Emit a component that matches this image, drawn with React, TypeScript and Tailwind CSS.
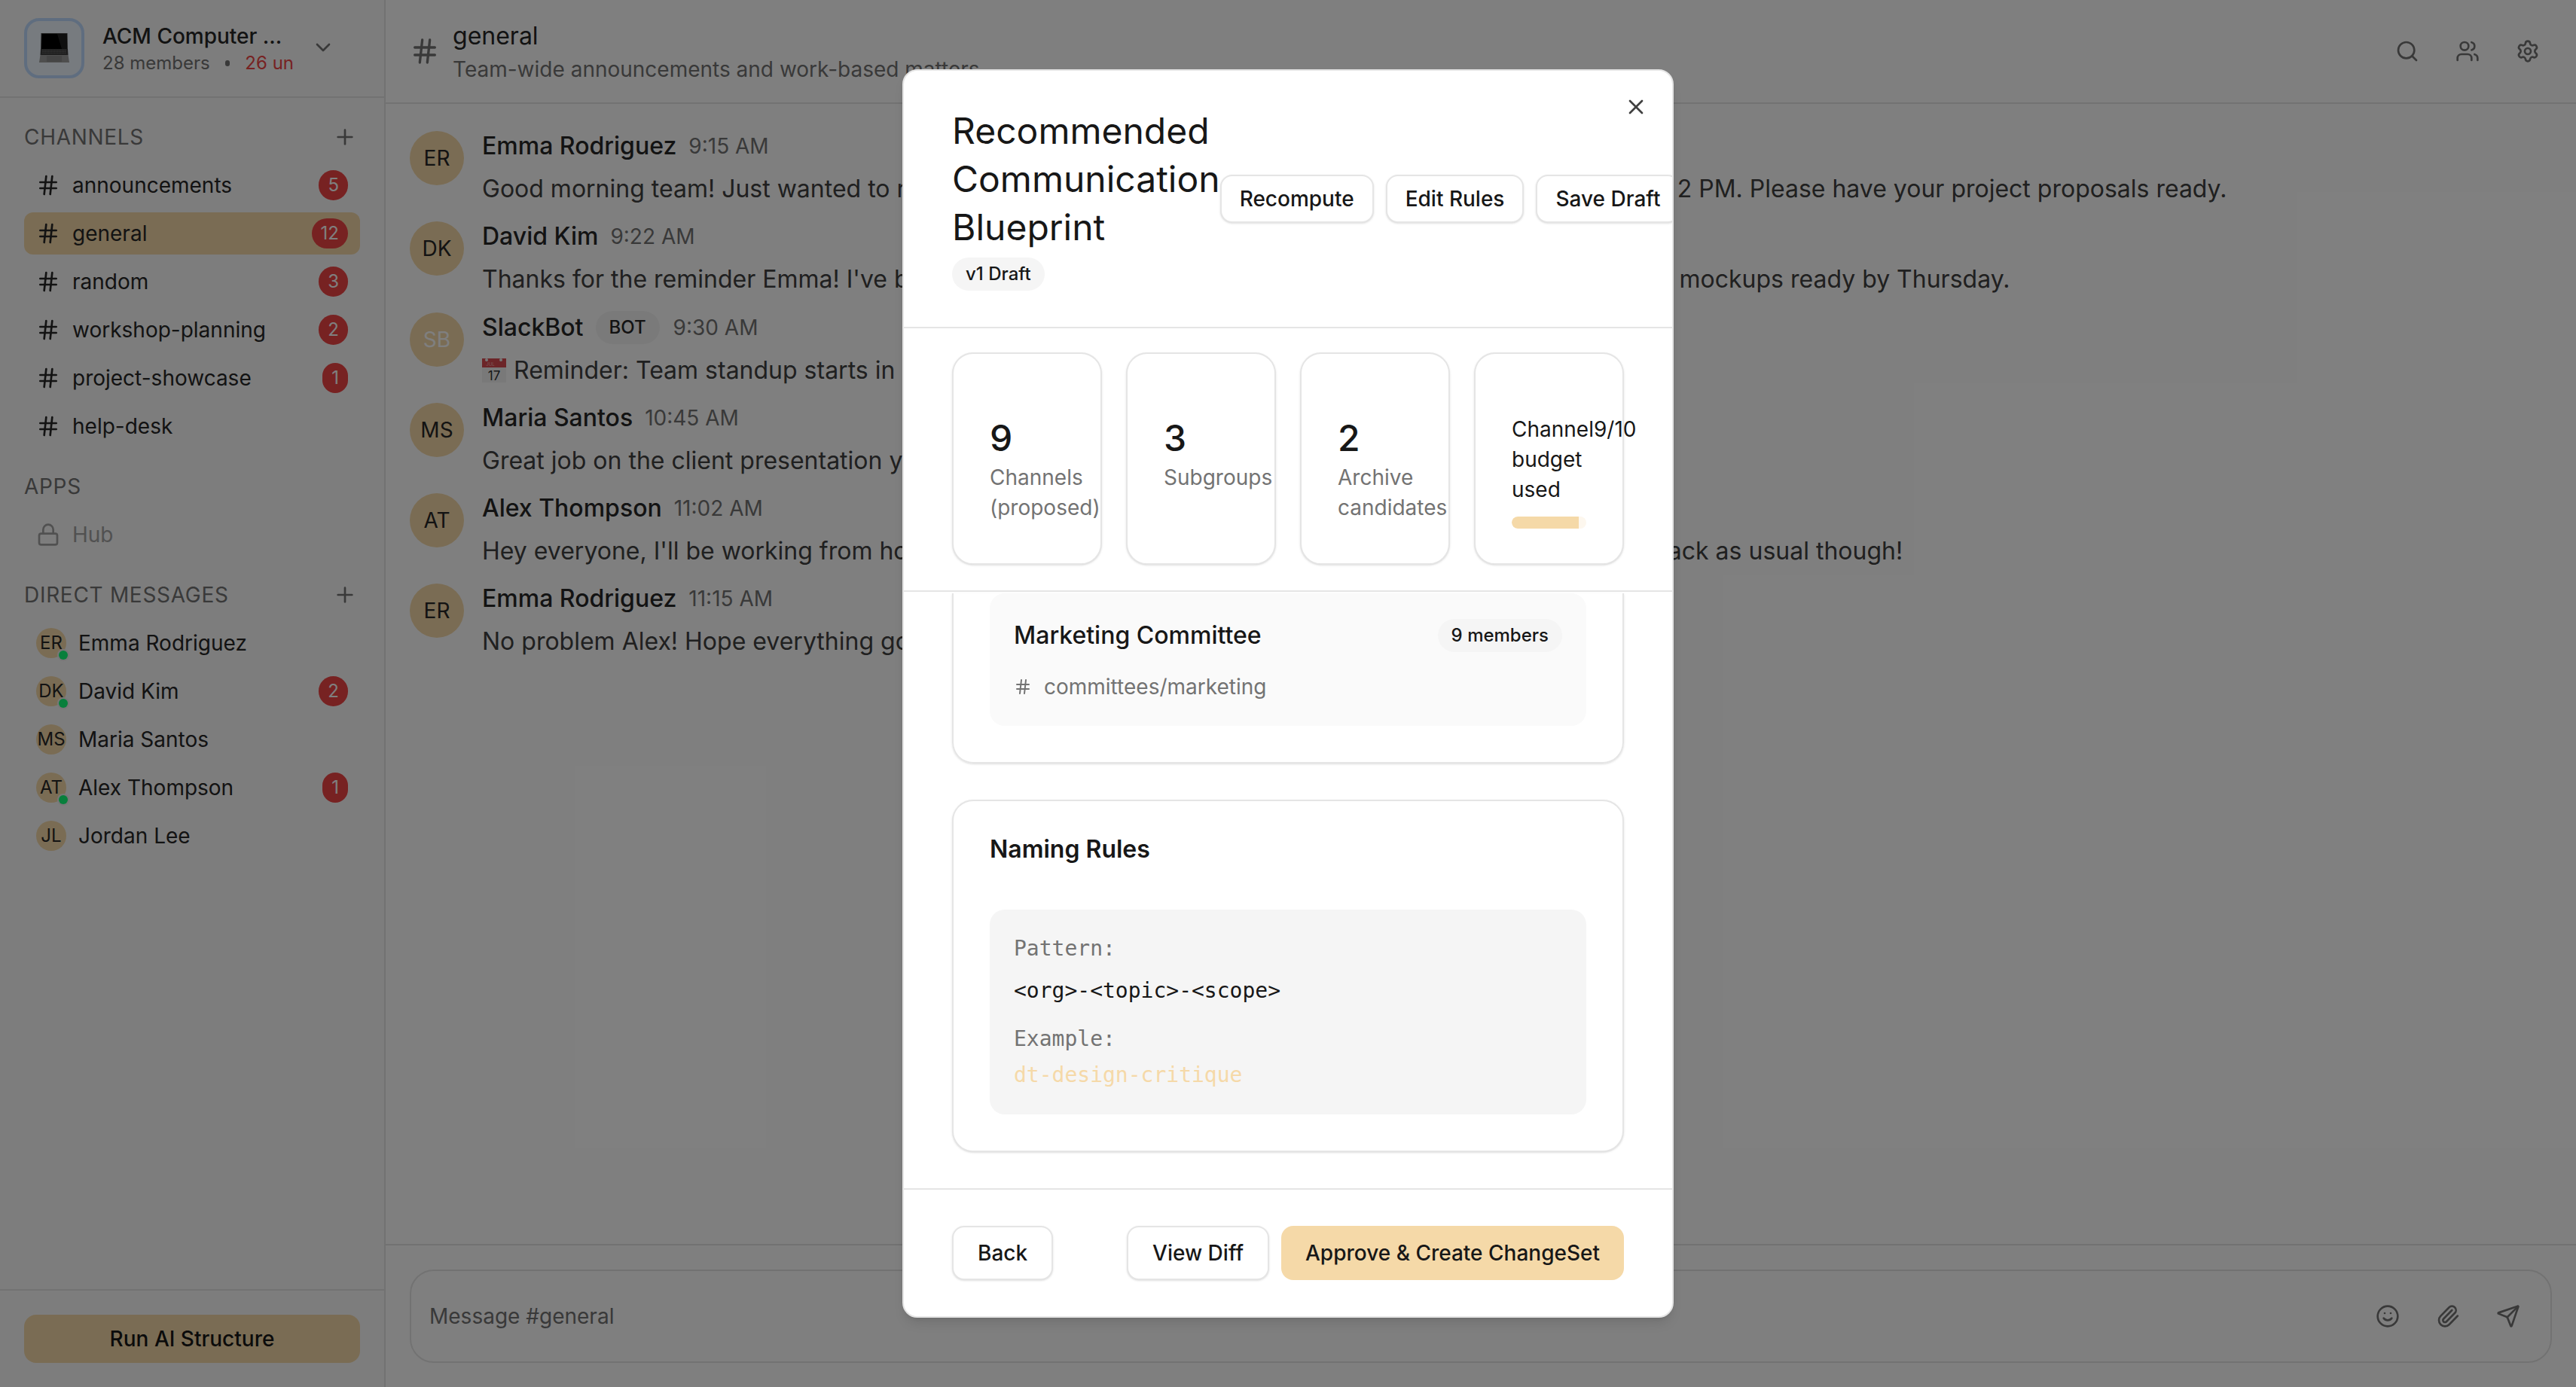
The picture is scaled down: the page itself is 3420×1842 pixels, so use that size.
import { Hash, Plus, ChevronDown, Lock, Search, Users, Settings, Smile, Paperclip, Send, X } from "lucide-react";

const channels = [
  { name: "announcements", count: "5" },
  { name: "general", count: "12", active: true },
  { name: "random", count: "3" },
  { name: "workshop-planning", count: "2" },
  { name: "project-showcase", count: "1" },
  { name: "help-desk" },
];

const people = [
  { initials: "ER", name: "Emma Rodriguez", online: true },
  { initials: "DK", name: "David Kim", online: true, count: "2" },
  { initials: "MS", name: "Maria Santos" },
  { initials: "AT", name: "Alex Thompson", online: true, count: "1" },
  { initials: "JL", name: "Jordan Lee" },
];

const messages = [
  { initials: "ER", name: "Emma Rodriguez", time: "9:15 AM", text: "Good morning team! Just wanted to remind everyone about our weekly all-hands team meeting today, at 2 PM. Please have your project proposals ready." },
  { initials: "DK", name: "David Kim", time: "9:22 AM", text: "Thanks for the reminder Emma! I've been busy working on the new homepage designs, and will have the mockups ready by Thursday." },
  { initials: "SB", name: "SlackBot", time: "9:30 AM", bot: true, text: "Reminder: Team standup starts in 15 minutes." },
  { initials: "MS", name: "Maria Santos", time: "10:45 AM", text: "Great job on the client presentation yesterday!" },
  { initials: "AT", name: "Alex Thompson", time: "11:02 AM", text: "Hey everyone, I'll be working from home today due to a big family commitment. I'll still be available on Slack as usual though!" },
  { initials: "ER", name: "Emma Rodriguez", time: "11:15 AM", text: "No problem Alex! Hope everything goes well." },
];

function CountBadge({ value }: { value: string }) {
  return (
    <span className="ml-auto flex h-10 items-center rounded-full bg-[#ef4444] px-3 text-[24px] leading-8 text-white">{value}</span>
  );
}

function SectionLabel({ label, plus }: { label: string; plus?: boolean }) {
  return (
    <div className="flex h-10 items-center justify-between pr-[4px]">
      <span className="text-[28px] uppercase leading-10 tracking-[0.7px] text-[#737373]">{label}</span>
      {plus && <Plus size={32} strokeWidth={2} className="text-[#737373]" />}
    </div>
  );
}

function Laptop() {
  return (
    <svg width="40" height="40" viewBox="0 0 40 40">
      <path d="M2.5 0H37.5L38 24H2Z" fill="#4a4a4a" />
      <path d="M3.5 1H36.5L37 21H3Z" fill="#000" />
      <path d="M24 1H36.5L37 21H30Z" fill="#1f1f1f" />
      <path d="M2 21H38L38.5 29H1.5Z" fill="#3c3c3c" />
      <path d="M4 22.5H36M4 24.5H36M4 26.5H36" stroke="#777" strokeWidth="0.8" strokeDasharray="1.4 0.6" />
      <path d="M1.5 29H38.5L40 39H0Z" fill="#9c9c9c" />
      <path d="M10 30H30V38H10Z" fill="#8a8a8a" />
    </svg>
  );
}

function Sidebar() {
  return (
    <aside className="flex h-full w-[512px] shrink-0 flex-col border-r-2 border-[#e5e5e5] bg-[#fafafa]">
      <div className="flex h-[130px] shrink-0 items-start border-b-2 border-[#e5e5e5] pl-8 pr-8 pt-6">
        <div className="flex h-20 w-20 shrink-0 items-center justify-center rounded-[20px] border-4 border-[#bfdbfe] bg-[#eff6ff]">
          <Laptop />
        </div>
        <div className="ml-[24px] w-[254px] min-w-0 pt-[4px]">
          <div className="truncate text-[28px] font-medium leading-[40px] text-[#262626]">ACM Computer ...</div>
          <div className="mt-[2px] flex h-[28px] items-center whitespace-nowrap text-[24px] leading-8 text-[#737373]">
            <span>28 members</span>
            <span className="mx-[20px] h-[8px] w-[8px] rounded-full bg-[#737373]"></span>
            <span className="text-[#ef4444]">26 un</span>
          </div>
        </div>
        <ChevronDown size={32} className="ml-[23px] mt-[23px] shrink-0 text-[#737373]" />
      </div>

      <nav className="flex min-h-0 flex-1 flex-col px-8 pt-[32px]">
        <SectionLabel label="Channels" plus />
        <div className="mt-[16px] flex flex-col gap-2">
          {channels.map((c) => (
            <div key={c.name} className={`flex h-14 items-center rounded-[12px] pl-4 pr-4 ${c.active ? "bg-[#f5d9a8]" : ""}`}>
              <Hash size={32} className="shrink-0 text-[#262626]" />
              <span className="ml-4 text-[28px] leading-10 text-[#262626]">{c.name}</span>
              {c.count && <CountBadge value={c.count} />}
            </div>
          ))}
        </div>

        <div className="mt-[32px]">
          <SectionLabel label="Apps" />
        </div>
        <div className="mt-[16px] flex h-14 items-center pl-4">
          <Lock size={32} className="shrink-0 text-[#a3a3a3]" />
          <span className="ml-4 text-[28px] leading-10 text-[#a3a3a3]">Hub</span>
        </div>

        <div className="mt-[32px]">
          <SectionLabel label="Direct Messages" plus />
        </div>
        <div className="mt-[16px] flex flex-col gap-2">
          {people.map((p) => (
            <div key={p.name} className="flex h-14 items-center pl-4 pr-4">
              <div className="relative flex h-10 w-10 shrink-0 items-center justify-center rounded-full bg-[#f5d9a8] text-[24px] text-[#262626]">
                {p.initials}
                {p.online && <span className="absolute bottom-[-2px] right-[-2px] h-3 w-3 rounded-full bg-[#10ff78] ring-2 ring-[#f0f0f0]"></span>}
              </div>
              <span className="ml-4 text-[28px] leading-10 text-[#262626]">{p.name}</span>
              {p.count && <CountBadge value={p.count} />}
            </div>
          ))}
        </div>
      </nav>

      <div className="shrink-0 border-t-2 border-[#e5e5e5] px-8 pb-8 pt-[32px]">
        <div className="flex h-16 w-[446px] items-center justify-center rounded-[16px] bg-[#f5d9a8] text-[28px] font-medium text-[#171717]">
          Run AI Structure
        </div>
      </div>
    </aside>
  );
}

function CalendarEmoji() {
  return (
    <svg width="32" height="32" viewBox="0 0 32 32" className="mr-[10px] inline-block align-[-5px]">
      <rect x="0" y="0" width="32" height="32" fill="#f2f2f2" />
      <rect x="0" y="0" width="32" height="12" fill="#d94a50" />
      <circle cx="6" cy="2" r="2" fill="#f0f0f0" />
      <circle cx="25" cy="2" r="2" fill="#f0f0f0" />
      <text x="11" y="10" textAnchor="middle" fontSize="6" fill="#f3b3b3" fontFamily="Inter">JUL</text>
      <text x="16" y="29" textAnchor="middle" fontSize="17" fill="#333" fontFamily="Inter">17</text>
    </svg>
  );
}

function Main() {
  return (
    <main className="flex h-full min-w-0 flex-1 flex-col bg-white">
      <header className="flex h-[138px] shrink-0 items-center border-b-2 border-[#e5e5e5] pl-[32px] pr-[48px]">
        <Hash size={40} className="shrink-0 text-[#737373]" />
        <div className="ml-[17px] mt-[2px]">
          <div className="text-[32px] leading-[44px] text-[#262626]">general</div>
          <div className="mt-[2px] text-[28px] leading-[40px] text-[#737373]">Team-wide announcements and work-based matters</div>
        </div>
        <div className="ml-auto flex items-center gap-[48px] text-[#737373]">
          <Search size={32} />
          <Users size={32} />
          <Settings size={32} />
        </div>
      </header>

      <div className="flex min-h-0 flex-1 flex-col gap-[17.25px] pl-8 pt-9">
        {messages.map((m, i) => (
          <div key={i} className="flex">
            <div className={`flex h-[72px] w-[72px] shrink-0 items-center justify-center rounded-full bg-[#f5d9a8] text-[28px] ${m.bot ? "text-white" : "text-[#262626]"}`}>
              {m.initials}
            </div>
            <div className="ml-[24px]">
              <div className="flex h-10 items-center whitespace-nowrap">
                <span className="text-[32px] font-medium leading-10 text-[#262626]">{m.name}</span>
                {m.bot && (
                  <span className="ml-[16px] mr-[2px] flex h-11 items-center rounded-full bg-[#f5f5f5] px-[18px] text-[24px] font-medium text-[#262626]">BOT</span>
                )}
                <span className="ml-[16px] text-[28px] leading-10 text-[#737373]">{m.time}</span>
              </div>
              <div className="mt-[11px] whitespace-nowrap text-[32px] leading-[52px] text-[#404040]">
                {m.bot && <CalendarEmoji />}
                {m.text}
              </div>
            </div>
          </div>
        ))}
      </div>

      <div className="shrink-0 border-t-2 border-[#e5e5e5] pb-[32px] pl-8 pr-8 pt-[32px]">
        <div className="flex h-[124px] items-center rounded-[32px] border-2 border-[#e5e5e5] pl-[24px] pr-[40px]">
          <div className="flex h-[74px] min-w-0 flex-1 items-center rounded-[16px] bg-[#fefefe] text-[28px] text-[#737373]">
            Message #general
          </div>
          <div className="ml-[40px] flex items-center gap-[48px] text-[#737373]">
            <Smile size={32} />
            <Paperclip size={32} />
            <Send size={32} />
          </div>
        </div>
      </div>
    </main>
  );
}

function OutlineButton({ label, className }: { label: string; className: string }) {
  return (
    <span className={`flex shrink-0 items-center justify-center whitespace-nowrap rounded-[16px] border-2 border-[#e5e5e5] bg-white text-[28px] font-medium text-[#171717] shadow-sm ${className}`}>
      {label}
    </span>
  );
}

function Stat({ value, label }: { value: string; label: string }) {
  return (
    <div className="rounded-[28px] border-2 border-[#e5e5e5] bg-white pb-[46px] pl-12 pr-12 pt-[80px] shadow-sm">
      <div className="text-[48px] font-medium leading-[64px] text-[#171717]">{value}</div>
      <div className="text-[28px] leading-10 text-[#737373]">{label}</div>
    </div>
  );
}

function Modal() {
  return (
    <div className="relative flex h-[1658px] w-[1024px] flex-col overflow-hidden rounded-[20px] border-2 border-[#e5e5e5] bg-white shadow-lg">
      <X size={32} className="absolute right-[32px] top-[32px] z-10 text-[#404040]" />

      <div className="flex shrink-0 items-center border-b-2 border-[#e5e5e5] px-[64px] pb-[48px] pt-[48px]">
        <div className="flex-1">
          <div className="text-[48px] leading-[64px] text-[#171717]">Recommended Communication Blueprint</div>
          <span className="mt-[8px] flex h-11 w-fit items-center rounded-full bg-[#f5f5f5] px-[18px] text-[24px] font-medium text-[#171717]">v1 Draft</span>
        </div>
        <div className="flex shrink-0 gap-[16px]">
          <OutlineButton label="Recompute" className="h-16 px-[24px]" />
          <OutlineButton label="Edit Rules" className="h-16 px-[24px]" />
          <OutlineButton label="Save Draft" className="h-16 px-[24px]" />
        </div>
      </div>

      <div className="grid shrink-0 grid-cols-4 gap-8 border-b-2 border-[#e5e5e5] px-[64px] pb-[34px] pt-8">
        <Stat value="9" label="Channels (proposed)" />
        <Stat value="3" label="Subgroups" />
        <Stat value="2" label="Archive candidates" />
        <div className="rounded-[28px] border-2 border-[#e5e5e5] bg-white pb-[46px] pl-12 pr-12 pt-[80px] shadow-sm">
          <div className="flex justify-between text-[28px] leading-10 text-[#171717]">
            <span>Channel budget used</span>
            <span>9/10</span>
          </div>
          <div className="mt-4 h-4 overflow-hidden rounded-full bg-[#fdf7ee]">
            <div className="h-full rounded-l-full bg-[#f5d9a8]" style={{ width: "90%" }}></div>
          </div>
        </div>
      </div>

      <div className="flex min-h-0 flex-1 flex-col justify-end overflow-hidden px-[64px] pb-[48px]">
        <div className="shrink-0 rounded-b-[28px] border-x-2 border-b-2 border-[#e5e5e5] px-12 pb-12 shadow-sm">
          <div className="rounded-[20px] bg-[#fafafa] px-8 pb-8 pt-[34px]">
            <div className="flex h-11 items-center justify-between">
              <span className="text-[32px] font-medium text-[#171717]">Marketing Committee</span>
              <span className="flex h-11 items-center rounded-full bg-[#f5f5f5] px-[18px] text-[24px] font-medium text-[#171717]">9 members</span>
            </div>
            <div className="mt-[26px] flex h-10 items-center text-[28px] text-[#737373]">
              <Hash size={24} className="mr-[16px] shrink-0" />
              committees/marketing
            </div>
          </div>
        </div>

        <div className="mt-12 shrink-0 rounded-[28px] border-2 border-[#e5e5e5] bg-white px-12 pb-12 pt-12 shadow-sm">
          <div className="text-[32px] font-semibold leading-8 text-[#171717]">Naming Rules</div>
          <div className="mt-16 rounded-[20px] bg-[#f5f5f5] p-8 font-['DejaVu_Sans_Mono',monospace] text-[28px] leading-10">
            <div className="text-[#737373]">Pattern:</div>
            <div className="mt-4 text-[#171717]">&lt;org&gt;-&lt;topic&gt;-&lt;scope&gt;</div>
            <div className="mt-6 text-[#737373]">Example:</div>
            <div className="mt-2 text-[#f5d9a8]">dt-design-critique</div>
          </div>
        </div>
      </div>

      <div className="flex shrink-0 items-center border-t-2 border-[#e5e5e5] px-[64px] py-12">
        <OutlineButton label="Back" className="h-[72px] px-[32px]" />
        <div className="ml-auto flex gap-4">
          <OutlineButton label="View Diff" className="h-[72px] px-[32px]" />
          <span className="flex h-[72px] items-center whitespace-nowrap rounded-[16px] bg-[#f5d9a8] px-[32px] text-[28px] font-medium text-[#171717]">
            Approve &amp; Create ChangeSet
          </span>
        </div>
      </div>
    </div>
  );
}

export default function App() {
  return (
    <div className="relative flex h-[1842px] w-[3420px] overflow-hidden bg-white font-['Inter',sans-serif]">
      <Sidebar />
      <Main />
      <div className="absolute inset-0 flex items-center justify-center bg-black/50">
        <Modal />
      </div>
    </div>
  );
}
